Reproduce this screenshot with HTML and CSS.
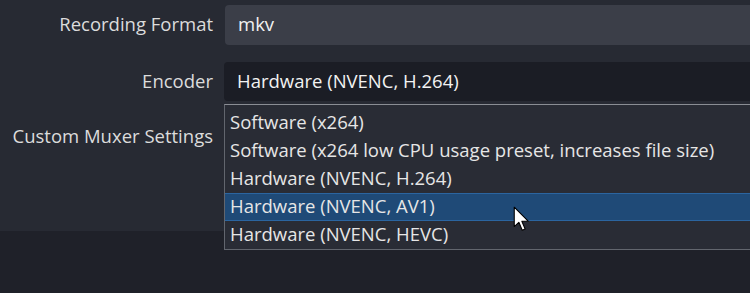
FILE: index.html
```html
<!DOCTYPE html>
<html>
<head>
<meta charset="utf-8">
<link rel="stylesheet" href="styles.css">
</head>
<body>
<div class="panel">
  <div class="form">
    <div class="row row-format">
      <div class="label">Recording Format</div>
      <div class="field field-light">mkv</div>
    </div>
    <div class="row row-encoder">
      <div class="label">Encoder</div>
      <div class="field field-dark">Hardware (NVENC, H.264)</div>
    </div>
    <div class="row row-muxer">
      <div class="label">Custom Muxer Settings</div>
      <div class="field field-empty"></div>
    </div>
  </div>
  <ul class="dropdown">
    <li class="item">Software (x264)</li>
    <li class="item">Software (x264 low CPU usage preset, increases file size)</li>
    <li class="item">Hardware (NVENC, H.264)</li>
    <li class="item item-hover">Hardware (NVENC, AV1)</li>
    <li class="item">Hardware (NVENC, HEVC)</li>
  </ul>
  <svg class="cursor" width="17" height="26" viewBox="0 0 14 21.5">
    <path d="M1 1 L1 17 L4.8 13.5 L7.6 20 L10 19 L7.3 12.6 L12.5 12.6 Z" fill="#fff" stroke="#000" stroke-width="0.9" stroke-linejoin="round"/>
  </svg>
</div>
<div class="footer"></div>
</body>
</html>
```
FILE: styles.css
```css
html, body {
  margin: 0;
  padding: 0;
  background: #1f2129;
  width: 750px;
  height: 293px;
  overflow: hidden;
  font-family: "Open Sans", "Noto Sans", sans-serif;
}
.panel {
  position: relative;
  height: 231px;
  background: #272a33;
}
.form {
  display: flex;
  flex-direction: column;
  padding-top: 5px;
  width: 770px;
}
.row {
  display: flex;
  align-items: center;
  gap: 12px;
}
.label {
  width: 213px;
  flex: 0 0 213px;
  text-align: right;
  color: #dcdcdc;
  font-size: 18.5px;
  white-space: nowrap;
  padding-bottom: 3px;
}
.field {
  flex: 1;
  height: 40px;
  border-radius: 4px;
  box-sizing: border-box;
  padding-left: 13px;
  padding-bottom: 3px;
  display: flex;
  align-items: center;
  color: #f2f2f2;
  font-size: 18.5px;
}
.field-light {
  background: #3b3e48;
}
.row-encoder {
  margin-top: 17px;
}
.field-dark {
  background: #1b1d25;
  height: 39px;
  margin-left: -1px;
  padding-bottom: 2px;
}
.row-muxer {
  margin-top: 16px;
}
.field-empty {
  height: 40px;
}
.dropdown {
  position: absolute;
  left: 224px;
  top: 104px;
  width: 540px;
  margin: 0;
  padding: 4px 0 0 0;
  list-style: none;
  background: #292c35;
  border: 1px solid #62666e;
  border-top-color: #8a8d94;
  box-sizing: border-box;
  height: 146px;
  z-index: 2;
}
.item {
  height: 28px;
  line-height: 25px;
  padding-left: 5px;
  color: #e6e6e6;
  font-size: 18.5px;
  white-space: nowrap;
  box-sizing: border-box;
}
.item-hover {
  background: #1f4a77;
  border-top: 1px solid #2b65a0;
  border-bottom: 1px solid #2b65a0;
  line-height: 24px;
}
.cursor {
  position: absolute;
  left: 513px;
  top: 206px;
  z-index: 3;
}
.footer {
  height: 62px;
}
```
